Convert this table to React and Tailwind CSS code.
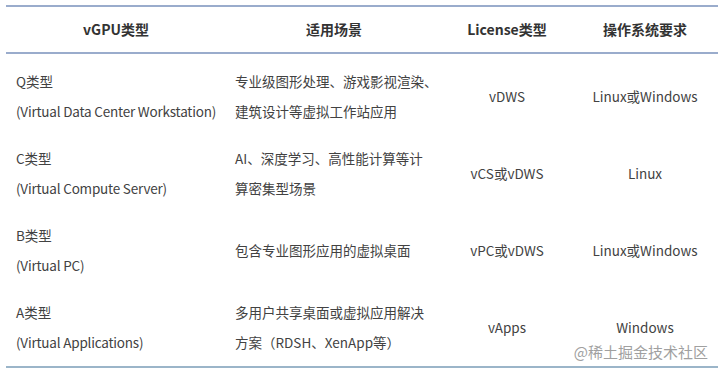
const ROWS = [
  {
    name: 'Q类型',
    full: '(Virtual Data Center Workstation)',
    scene: ['专业级图形处理、游戏影视渲染、', '建筑设计等虚拟工作站应用'],
    license: 'vDWS',
    os: 'Linux或Windows',
  },
  {
    name: 'C类型',
    full: '(Virtual Compute Server)',
    scene: ['AI、深度学习、高性能计算等计', '算密集型场景'],
    license: 'vCS或vDWS',
    os: 'Linux',
  },
  {
    name: 'B类型',
    full: '(Virtual PC)',
    scene: ['包含专业图形应用的虚拟桌面'],
    license: 'vPC或vDWS',
    os: 'Linux或Windows',
  },
  {
    name: 'A类型',
    full: '(Virtual Applications)',
    scene: ['多用户共享桌面或虚拟应用解决', '方案（RDSH、XenApp等）'],
    license: 'vApps',
    os: 'Windows',
  },
]

const COLS = 'grid grid-cols-[220px_216px_130px_1fr]'

export default function App() {
  return (
    <div
      className="relative w-[723px] h-[372px] bg-white text-[#424242] overflow-hidden"
      style={{ fontFamily: '"Noto Sans CJK SC", "Noto Sans", sans-serif' }}
    >
      <div className="ml-[6px] mr-[5px] pt-[5px]">
        {/* header */}
        <div className={`${COLS} h-[49px] items-center border-t-2 border-b-2 border-[#9aaccc] text-[14px] font-bold text-[#333]`}>
          <div className="text-center">vGPU类型</div>
          <div className="text-center">适用场景</div>
          <div className="text-center">License类型</div>
          <div className="text-center">操作系统要求</div>
        </div>

        {/* body */}
        <div className="pt-[4px] border-b-2 border-[#9bb5c9] text-[13.5px]">
          {ROWS.map(r => (
            <div key={r.name} className={`${COLS} h-[77px] items-center`}>
              <div className="pl-[10px] flex flex-col gap-[11px] leading-[19px]">
                <div>{r.name}</div>
                <div className="tracking-[-0.2px]">{r.full}</div>
              </div>
              <div className="pl-[9px] flex flex-col gap-[11px] leading-[19px]">
                {r.scene.map(s => (
                  <div key={s}>{s}</div>
                ))}
              </div>
              <div className="text-center">{r.license}</div>
              <div className="text-center">{r.os}</div>
            </div>
          ))}
        </div>
      </div>

      {/* watermark */}
      <div className="absolute right-[15px] top-[342px] text-[15px] text-[#a0a0a0] leading-[20px]">
        @稀土掘金技术社区
      </div>
    </div>
  )
}
